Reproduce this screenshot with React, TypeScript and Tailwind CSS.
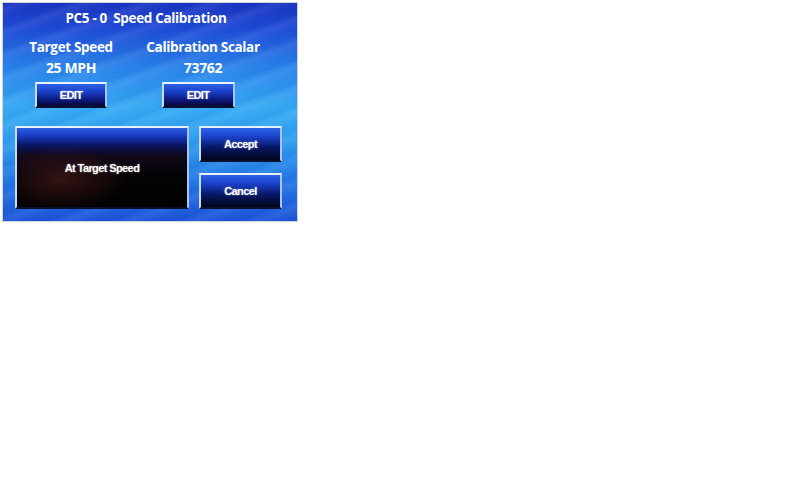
export default function App() {
  const btn =
    "flex items-center justify-center border-t-2 border-l-2 border-t-[#e8f2ff] border-l-[#c8dcff] border-r-2 border-b-2 border-r-[#a8c4f0] border-b-[#0a1030] text-white font-bold tracking-[-0.6px] text-[11px] [font-family:'Liberation_Sans',Arial,sans-serif] [text-shadow:0_0_2px_rgba(255,255,255,0.5)]";

  return (
    <div className="min-h-screen bg-white">
      <div className="ml-[2px] mt-[2px] w-[296px] h-[220px] border border-[#d0d4dc] relative overflow-hidden bg-[linear-gradient(180deg,#1a34c0_0%,#1f4cd6_12%,#2a84ea_30%,#37aaf3_48%,#30a0f0_62%,#2476e4_82%,#1c54d8_100%)] [font-family:'Open_Sans','DejaVu_Sans',sans-serif]">
        <div className="absolute inset-0 bg-[repeating-linear-gradient(160deg,rgba(255,255,255,0)_0px,rgba(255,255,255,0.07)_6px,rgba(255,255,255,0)_14px,rgba(0,40,140,0.06)_22px)]" />
        <div className="relative flex flex-col h-full">
          <div className="pt-[6px] pr-[8px] text-center text-white font-bold text-[13.5px] tracking-tight leading-[18px]">
            PC5 - 0&nbsp; Speed Calibration
          </div>
          <div className="flex mt-[12px]">
            <div className="w-[136px] flex flex-col items-center">
              <div className="text-white font-bold text-[13.5px] tracking-tight leading-[16px] whitespace-nowrap">Target Speed</div>
              <div className="text-white font-bold text-[14px] tracking-tight leading-[16px] mt-[5px]">25 MPH</div>
              <div className={`${btn} w-[72px] h-[26px] mt-[6px] bg-[linear-gradient(180deg,#2c62e8_0%,#1a40c8_35%,#0c1a80_70%,#060838_100%)]`}>
                EDIT
              </div>
            </div>
            <div className="w-[128px] flex flex-col items-center">
              <div className="text-white font-bold text-[13.5px] tracking-tight leading-[16px] whitespace-nowrap">Calibration Scalar</div>
              <div className="text-white font-bold text-[14px] tracking-tight leading-[16px] mt-[5px]">73762</div>
              <div className={`${btn} w-[73px] h-[26px] mt-[6px] -ml-[10px] bg-[linear-gradient(180deg,#2c62e8_0%,#1a40c8_35%,#0c1a80_70%,#060838_100%)]`}>
                EDIT
              </div>
            </div>
          </div>
          <div className="flex mt-[18px] pl-[12px] gap-[10px]">
            <div className={`${btn} w-[174px] h-[83px] bg-[linear-gradient(180deg,#2a5ee4_0%,#1a3cc0_10%,#0a1460_22%,#100818_35%,#050306_60%,#000000_100%)] relative overflow-hidden`}>
              <div className="absolute left-0 top-[18px] bottom-0 w-[110px] bg-[radial-gradient(ellipse_at_40%_55%,rgba(90,30,30,0.55),rgba(0,0,0,0)_70%)]" />
              <span className="relative mt-[2px]">At Target Speed</span>
            </div>
            <div className="flex flex-col gap-[11px]">
              <div className={`${btn} w-[83px] h-[36px] bg-[linear-gradient(180deg,#2c62e8_0%,#1a40c8_28%,#081868_60%,#020418_100%)]`}>
                Accept
              </div>
              <div className={`${btn} w-[83px] h-[36px] bg-[linear-gradient(180deg,#2c62e8_0%,#1a40c8_28%,#081868_60%,#020418_100%)]`}>
                Cancel
              </div>
            </div>
          </div>
        </div>
      </div>
    </div>
  );
}
